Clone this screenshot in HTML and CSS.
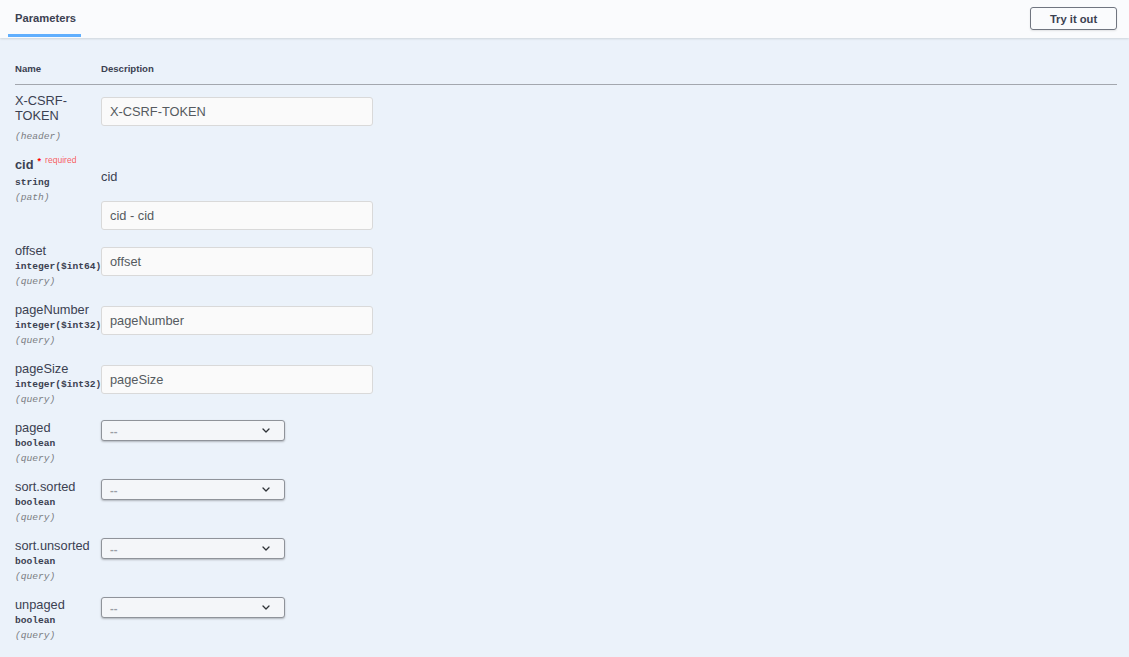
FILE: index.html
```html
<!DOCTYPE html>
<html lang="en">
<head>
<meta charset="utf-8">
<title>Parameters</title>
<link rel="stylesheet" href="styles.css">
</head>
<body>
<div class="section">
  <div class="section-header">
    <div class="tab"><h4 class="tab-title">Parameters</h4></div>
    <button class="try-btn" type="button">Try it out</button>
  </div>
  <div class="table-container">
    <div class="thead">
      <div class="th">Name</div>
      <div class="th">Description</div>
    </div>

    <div class="row">
      <div class="name-cell">
        <div class="p-name">X-CSRF-TOKEN</div>
        <div class="p-type"></div>
        <div class="p-in">(header)</div>
      </div>
      <div class="desc-cell">
        <div class="input"><span class="ph">X-CSRF-TOKEN</span></div>
      </div>
    </div>

    <div class="row">
      <div class="name-cell">
        <div class="p-name required">cid<span class="star">*</span><span class="req">required</span></div>
        <div class="p-type">string</div>
        <div class="p-in">(path)</div>
      </div>
      <div class="desc-cell">
        <p class="markdown">cid</p>
        <div class="input"><span class="ph">cid - cid</span></div>
      </div>
    </div>

    <div class="row">
      <div class="name-cell">
        <div class="p-name">offset</div>
        <div class="p-type">integer($int64)</div>
        <div class="p-in">(query)</div>
      </div>
      <div class="desc-cell">
        <div class="input"><span class="ph">offset</span></div>
      </div>
    </div>

    <div class="row">
      <div class="name-cell">
        <div class="p-name">pageNumber</div>
        <div class="p-type">integer($int32)</div>
        <div class="p-in">(query)</div>
      </div>
      <div class="desc-cell">
        <div class="input"><span class="ph">pageNumber</span></div>
      </div>
    </div>

    <div class="row">
      <div class="name-cell">
        <div class="p-name">pageSize</div>
        <div class="p-type">integer($int32)</div>
        <div class="p-in">(query)</div>
      </div>
      <div class="desc-cell">
        <div class="input"><span class="ph">pageSize</span></div>
      </div>
    </div>

    <div class="row">
      <div class="name-cell">
        <div class="p-name">paged</div>
        <div class="p-type">boolean</div>
        <div class="p-in">(query)</div>
      </div>
      <div class="desc-cell">
        <div class="select"><span class="sel-val">--</span><svg class="chev" width="8" height="5" viewBox="0 0 8 5"><path d="M1 1 L4 4 L7 1" fill="none" stroke="#2f3338" stroke-width="1.3" stroke-linecap="round" stroke-linejoin="round"/></svg></div>
      </div>
    </div>

    <div class="row">
      <div class="name-cell">
        <div class="p-name">sort.sorted</div>
        <div class="p-type">boolean</div>
        <div class="p-in">(query)</div>
      </div>
      <div class="desc-cell">
        <div class="select"><span class="sel-val">--</span><svg class="chev" width="8" height="5" viewBox="0 0 8 5"><path d="M1 1 L4 4 L7 1" fill="none" stroke="#2f3338" stroke-width="1.3" stroke-linecap="round" stroke-linejoin="round"/></svg></div>
      </div>
    </div>

    <div class="row">
      <div class="name-cell">
        <div class="p-name">sort.unsorted</div>
        <div class="p-type">boolean</div>
        <div class="p-in">(query)</div>
      </div>
      <div class="desc-cell">
        <div class="select"><span class="sel-val">--</span><svg class="chev" width="8" height="5" viewBox="0 0 8 5"><path d="M1 1 L4 4 L7 1" fill="none" stroke="#2f3338" stroke-width="1.3" stroke-linecap="round" stroke-linejoin="round"/></svg></div>
      </div>
    </div>

    <div class="row">
      <div class="name-cell">
        <div class="p-name">unpaged</div>
        <div class="p-type">boolean</div>
        <div class="p-in">(query)</div>
      </div>
      <div class="desc-cell">
        <div class="select"><span class="sel-val">--</span><svg class="chev" width="8" height="5" viewBox="0 0 8 5"><path d="M1 1 L4 4 L7 1" fill="none" stroke="#2f3338" stroke-width="1.3" stroke-linecap="round" stroke-linejoin="round"/></svg></div>
      </div>
    </div>
  </div>
</div>
</body>
</html>
```
FILE: styles.css
```css
html, body {
  margin: 0;
  padding: 0;
}
body {
  background: #ebf2fa;
  font-family: "Liberation Sans", Arial, Helvetica, sans-serif;
  color: #3b4151;
  min-height: 657px;
}
.section-header {
  height: 38px;
  background: #fafbfd;
  box-shadow: 0 1px 2px rgba(0, 0, 0, 0.12);
  display: flex;
  align-items: flex-start;
  justify-content: space-between;
  padding: 0 12px 0 8px;
  position: relative;
}
.tab {
  width: 73px;
  height: 34px;
  border-bottom: 3px solid #61affe;
  box-sizing: content-box;
}
.tab-title {
  margin: 0;
  padding: 12px 0 0 7px;
  font-size: 11.2px;
  line-height: 13px;
  font-weight: 700;
  color: #3b4151;
}
.try-btn {
  margin-top: 7px;
  width: 87px;
  height: 23px;
  border: 1px solid #707580;
  border-radius: 3px;
  background: transparent;
  font-family: "Liberation Sans", Arial, sans-serif;
  font-size: 11.2px;
  font-weight: 700;
  color: #3b4151;
  box-shadow: 0 1px 2px rgba(0, 0, 0, 0.1);
  padding: 0;
}
.table-container {
  padding: 0 12px 0 15px;
}
.thead {
  display: grid;
  grid-template-columns: 86px 1fr;
  padding: 25px 0 9px;
  border-bottom: 1px solid #a3a7ae;
}
.th {
  font-size: 9.6px;
  line-height: 12px;
  font-weight: 700;
  color: #3b4151;
}
.row {
  display: grid;
  grid-template-columns: 86px 1fr;
  align-items: start;
}
.name-cell {
  padding: 8px 0 6px;
}
.desc-cell {
  padding-top: 8px;
}
.p-name {
  font-size: 12.8px;
  line-height: 15px;
  color: #3b4151;
}
.p-name.required {
  font-weight: 700;
}
.star {
  color: #ff0000;
  font-size: 9px;
  position: relative;
  top: -5px;
  padding-left: 4px;
}
.req {
  color: rgba(255, 0, 0, 0.65);
  font-size: 8.6px;
  font-weight: 400;
  position: relative;
  top: -6px;
  padding-left: 4px;
}
.p-type {
  font-family: "Liberation Mono", "Courier New", monospace;
  font-size: 9.6px;
  font-weight: 700;
  line-height: 10px;
  padding: 4px 0;
  white-space: nowrap;
  color: #3b4151;
}
.p-in {
  font-family: "Liberation Mono", "Courier New", monospace;
  font-size: 9.6px;
  font-style: italic;
  line-height: 12px;
  color: #7a7d82;
  white-space: nowrap;
}
.markdown {
  margin: 12px 0 17px;
  font-size: 12.8px;
  line-height: 15px;
  color: #3b4151;
}
.input {
  margin: 4px 0;
  width: 272px;
  height: 29px;
  box-sizing: border-box;
  border: 1px solid #d9d9d9;
  border-radius: 3px;
  background: #fafafa;
  padding: 0 8px;
  display: flex;
  align-items: center;
}
.markdown + .input {
  margin: 0 0 5px;
}
.ph {
  font-size: 12.8px;
  color: #555a60;
}
.select {
  width: 184px;
  height: 21px;
  box-sizing: border-box;
  border: 1px solid #8f939a;
  border-radius: 3px;
  background: #f4f6f9;
  box-shadow: 0 1px 2px rgba(0, 0, 0, 0.25);
  display: flex;
  align-items: center;
  justify-content: space-between;
  padding: 0 14px 0 8px;
}
.sel-val {
  font-size: 11.2px;
  font-weight: 700;
  color: #9a9ea5;
}
.chev {
  display: block;
}
```
